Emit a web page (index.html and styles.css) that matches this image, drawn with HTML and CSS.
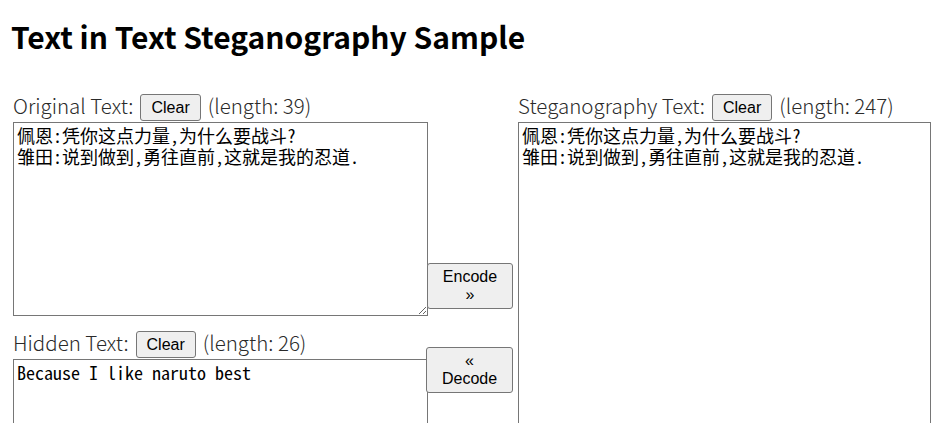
FILE: index.html
```html
<!DOCTYPE html>
<html lang="ja">
<head>
<meta charset="utf-8">
<title>Text in Text Steganography Sample</title>
<link rel="stylesheet" href="styles.css">
</head>
<body>
<h1 class="title">Text in Text Steganography Sample</h1>
<div class="board">
  <div class="cell original">
    <div class="label-row">
      <span class="label">Original Text:</span>
      <button class="btn clear">Clear</button>
      <span class="label">(length: 39)</span>
    </div>
    <textarea class="box">佩恩:凭你这点力量,为什么要战斗?
雏田:说到做到,勇往直前,这就是我的忍道.</textarea>
  </div>
  <div class="cell encode-cell">
    <button class="btn action">Encode<br>»</button>
  </div>
  <div class="cell steg">
    <div class="label-row">
      <span class="label">Steganography Text:</span>
      <button class="btn clear">Clear</button>
      <span class="label">(length: 247)</span>
    </div>
    <textarea class="box tall">佩恩:凭你这点力量,为什么要战斗?
雏田:说到做到,勇往直前,这就是我的忍道.</textarea>
  </div>
  <div class="cell hidden">
    <div class="label-row">
      <span class="label">Hidden Text:</span>
      <button class="btn clear">Clear</button>
      <span class="label">(length: 26)</span>
    </div>
    <textarea class="box">Because I like naruto best</textarea>
  </div>
  <div class="cell decode-cell">
    <button class="btn action">«<br>Decode</button>
  </div>
</div>
</body>
</html>
```

FILE: styles.css
```css
html, body {
  margin: 0;
  padding: 0;
  background: #ffffff;
}
body {
  padding: 0 13px;
  font-family: "Noto Sans CJK JP", "Noto Sans", sans-serif;
  color: #000;
}
.title {
  margin: 16px 0 0 -2px;
  font-size: 30px;
  line-height: 40px;
  font-weight: 700;
  height: 40px;
}
.board {
  margin-top: 38px;
  display: grid;
  grid-template-columns: 414px 91px 413px;
  grid-template-rows: auto 1fr;
}
.cell {
  display: flex;
  flex-direction: column;
}
.original { grid-column: 1; grid-row: 1; }
.encode-cell { grid-column: 2; grid-row: 1; justify-content: flex-end; align-items: flex-start; }
.steg { grid-column: 3; grid-row: 1 / span 2; }
.hidden { grid-column: 1; grid-row: 2; margin-top: 15px; }
.decode-cell { grid-column: 2; grid-row: 2; padding-top: 31px; align-items: flex-start; }

.label-row {
  display: flex;
  align-items: center;
  gap: 7px;
  height: 27px;
  margin-bottom: 1px;
}
.label {
  font-family: "Noto Sans CJK JP", "Noto Sans", sans-serif;
  font-weight: 300;
  font-size: 20.5px;
  color: #2a2a2a;
  white-space: nowrap;
  padding-bottom: 6px;
}
.btn {
  font-family: "Liberation Sans", Arial, sans-serif;
  font-size: 16px;
  color: #000;
  background: #efefef;
  border: 1px solid #767676;
  border-radius: 3px;
  margin: 0;
}
.clear {
  height: 27px;
  padding: 1px 10px 0;
  line-height: 18px;
}
.action {
  width: 86px;
  height: 46px;
  padding: 0;
  line-height: 18px;
}
.encode-cell .action { margin: 0 0 7px 0; }
.decode-cell .action { margin-left: -1px; width: 87px; }
.box {
  box-sizing: border-box;
  width: 415px;
  height: 194px;
  margin: 0;
  padding: 2px 3px;
  border: 1px solid #767676;
  font-family: "Noto Sans Mono CJK JP", "Noto Sans CJK JP", monospace;
  font-size: 18px;
  line-height: 21px;
  color: #000;
  background: #fff;
}
.steg .box { width: 413px; }
.tall { height: 440px; }
```
